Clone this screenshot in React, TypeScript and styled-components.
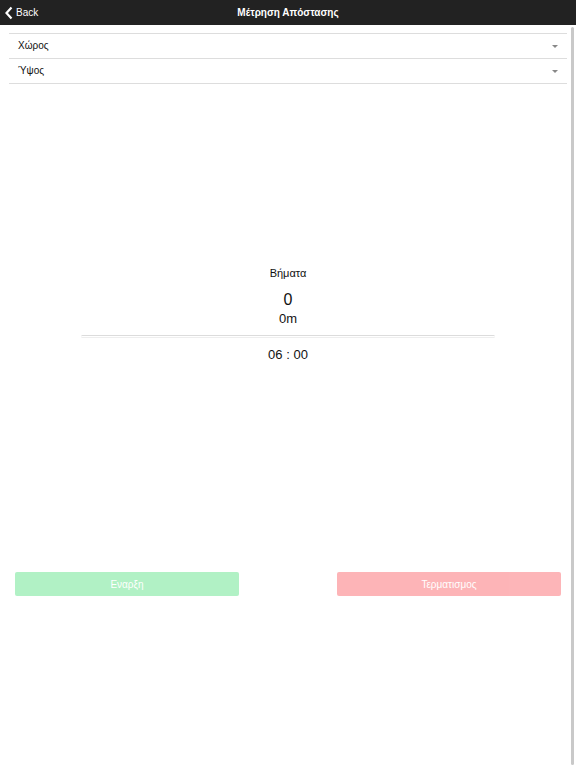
import React from "react";
import styled, { createGlobalStyle } from "styled-components";

const Global = createGlobalStyle`
  html, body { margin: 0; padding: 0; background: #fff; }
  body { font-family: "Liberation Sans", Arial, sans-serif; color: #111; }
`;

const Page = styled.div`
  position: relative;
  width: 576px;
  height: 768px;
  display: flex;
  flex-direction: column;
  overflow: hidden;
`;

const TopBar = styled.header`
  height: 25px;
  background: #222;
  color: #fff;
  display: flex;
  align-items: center;
  justify-content: center;
  position: relative;
  flex-shrink: 0;
`;

const BackLink = styled.div`
  position: absolute;
  left: 4px;
  top: 0;
  height: 25px;
  display: flex;
  align-items: center;
  gap: 2px;
  font-size: 10px;
  color: #fff;
`;

const Title = styled.h1`
  margin: 0;
  font-size: 10px;
  font-weight: bold;
`;

const Fields = styled.div`
  margin: 8px 9px 0;
  border-top: 1px solid #ddd;
`;

const FieldRow = styled.div`
  height: 24px;
  border-bottom: 1px solid #ddd;
  display: flex;
  align-items: center;
  justify-content: space-between;
  padding: 0 9px;
  font-size: 10px;
  line-height: 12px;
`;

const Caret = styled.span`
  width: 0;
  height: 0;
  border-left: 3px solid transparent;
  border-right: 3px solid transparent;
  border-top: 3px solid #888;
`;

const Counter = styled.section`
  margin-top: 182px;
  display: flex;
  flex-direction: column;
  align-items: center;
`;

const Label = styled.div<{ $size: number; $mt?: number }>`
  font-size: ${(p) => p.$size}px;
  line-height: ${(p) => p.$size + 3}px;
  margin-top: ${(p) => p.$mt ?? 0}px;
`;

const Divider = styled.div`
  width: 414px;
  height: 1px;
  margin-top: 8px;
  border-top: 1px solid #dcdcdc;
  border-bottom: 1px solid #eee;
  border-radius: 2px;
`;

const Actions = styled.div`
  margin-top: 209px;
  padding: 0 15px;
  display: flex;
  justify-content: space-between;
`;

const ActionButton = styled.button<{ $tone: "go" | "stop" }>`
  width: 224px;
  height: 24px;
  border: none;
  border-radius: 2px;
  background: ${(p) => (p.$tone === "go" ? "#adf1c2" : "#fdb1b4")};
  color: #fff;
  font-family: "Liberation Sans", Arial, sans-serif;
  font-size: 10px;
  opacity: 0.95;
`;

const ScrollThumb = styled.div`
  position: absolute;
  right: 2px;
  top: 27px;
  bottom: 3px;
  width: 3px;
  border-radius: 2px;
  background: #c9c9c9;
`;

export default function App() {
  return (
    <Page>
      <Global />
      <TopBar>
        <BackLink>
          <svg width="10" height="14" viewBox="0 0 10 14">
            <path d="M7.5 1.5 L2.5 7 L7.5 12.5" fill="none" stroke="#fff" strokeWidth="2.2" />
          </svg>
          <span>Back</span>
        </BackLink>
        <Title>Μέτρηση Απόστασης</Title>
      </TopBar>
      <Fields>
        <FieldRow>
          <span>Χώρος</span>
          <Caret />
        </FieldRow>
        <FieldRow>
          <span>Ύψος</span>
          <Caret />
        </FieldRow>
      </Fields>
      <Counter>
        <Label $size={11}>Βήματα</Label>
        <Label $size={16} $mt={10}>0</Label>
        <Label $size={13} $mt={2}>0m</Label>
        <Divider />
        <Label $size={13} $mt={9}>06 : 00</Label>
      </Counter>
      <Actions>
        <ActionButton $tone="go">Εναρξη</ActionButton>
        <ActionButton $tone="stop">Τερματισμος</ActionButton>
      </Actions>
      <ScrollThumb />
    </Page>
  );
}
